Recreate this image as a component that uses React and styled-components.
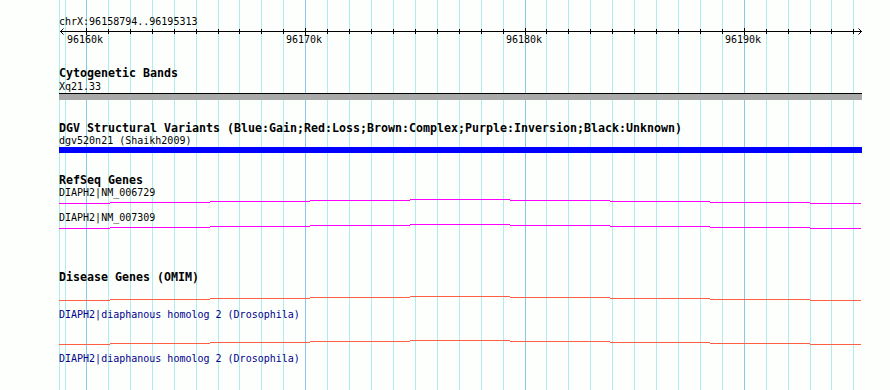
import React from "react"
import styled, { createGlobalStyle } from "styled-components"

const GlobalStyle = createGlobalStyle`
  html, body {
    margin: 0;
    padding: 0;
    background: #fdfffd;
  }
`

// grid / tick positions: one every 1k, a major one every 10k (96160k = k 0)
const tickX = k => Math.round(86.02 + 21.925 * k)
const TICKS = Array.from({ length: 36 }, (_, k) => k)
const MAJORS = [
    { k: 0, label: "96160k" },
    { k: 10, label: "96170k" },
    { k: 20, label: "96180k" },
    { k: 30, label: "96190k" },
]

// step pattern of the transcript lines (offset 0 = highest)
const SEGMENTS = [59, 110, 210, 310, 410, 510, 610, 710, 810, 861]
const OFFSETS = [4, 3, 2, 1, 0, 1, 2, 3, 4]

function App() {
    return (
        <>
            <GlobalStyle />
            <Page>
                <GridLayer width="890" height="390" shapeRendering="crispEdges">
                    <rect x="59" y="0" width="1" height="390" fill="#afeeee" />
                    <rect x="65" y="0" width="1" height="390" fill="#afeeee" />
                    {TICKS.map(k => (
                        <rect key={k} x={tickX(k)} y="0" width="1" height="390"
                            fill={k % 10 === 0 ? "#88c8e8" : "#afeeee"} />
                    ))}
                </GridLayer>

                <Panel>
                    <SmallText>chrX:96158794..96195313</SmallText>
                    <RulerSvg width="890" height="7" shapeRendering="crispEdges">
                        <rect x="60" y="3" width="802" height="1" fill="#000" />
                        {TICKS.map(k => (
                            k % 10 === 0
                                ? <rect key={k} x={tickX(k)} y="0" width="1" height="7" fill="#000" />
                                : <rect key={k} x={tickX(k)} y="1" width="1" height="5" fill="#000" />
                        ))}
                        <path d="M63.5 0.5 L60.5 3.5 L63.5 6.5" stroke="#000" fill="none" shapeRendering="auto" />
                        <path d="M858.5 0.5 L861.5 3.5 L858.5 6.5" stroke="#000" fill="none" shapeRendering="auto" />
                    </RulerSvg>
                    <TickRow>
                        {MAJORS.map(m => (
                            <TickLabel key={m.k} style={{ left: tickX(m.k) - 19 }}>{m.label}</TickLabel>
                        ))}
                    </TickRow>

                    <TrackTitle $gap={20}>Cytogenetic Bands</TrackTitle>
                    <SmallText>Xq21.33</SmallText>
                    <BandBar />

                    <TrackTitle $gap={21}>DGV Structural Variants (Blue:Gain;Red:Loss;Brown:Complex;Purple:Inversion;Black:Unknown)</TrackTitle>
                    <SmallText $gap={-1}>dgv520n21 (Shaikh2009)</SmallText>
                    <VariantBar />

                    <TrackTitle $gap={20}>RefSeq Genes</TrackTitle>
                    <SmallText $gap={-1}>DIAPH2|NM_006729</SmallText>
                    <GeneLine color="#ff00ff" />
                    <SmallText $gap={7}>DIAPH2|NM_007309</SmallText>
                    <GeneLine color="#ff00ff" />

                    <TrackTitle $gap={41}>Disease Genes (OMIM)</TrackTitle>
                    <GeneLine color="#ff5f42" gap={12} />
                    <SmallText $gap={7} $color="#00008b">DIAPH2|diaphanous homolog 2 (Drosophila)</SmallText>
                    <GeneLine color="#ff5f42" gap={19} />
                    <SmallText $gap={7} $color="#00008b">DIAPH2|diaphanous homolog 2 (Drosophila)</SmallText>
                </Panel>
            </Page>
        </>
    )
}

function GeneLine({ color, gap = 0 }) {
    return (
        <LineSvg width="890" height="5" $gap={gap} shapeRendering="crispEdges">
            {OFFSETS.map((o, i) => (
                <rect key={i} x={SEGMENTS[i]} y={o} width={SEGMENTS[i + 1] - SEGMENTS[i]} height="1" fill={color} />
            ))}
        </LineSvg>
    )
}

const Page = styled.div`
position: relative;
width: 890px;
height: 390px;
overflow: hidden;
background: #fdfffd;
`;

const GridLayer = styled.svg`
position: absolute;
top: 0;
left: 0;
display: block;
`;

const Panel = styled.div`
position: relative;
display: flex;
flex-direction: column;
padding-top: 15px;
`;

const SmallText = styled.div`
margin: ${p => p.$gap || 0}px 0 0 59px;
font-family: "DejaVu Sans Mono", "Liberation Mono", monospace;
font-size: 10px;
line-height: 13px;
height: 13px;
color: ${p => p.$color || "#000"};
white-space: pre;
`;

const TrackTitle = styled.div`
margin: ${p => p.$gap || 0}px 0 0 59px;
font-family: "DejaVu Sans Mono", "Liberation Mono", monospace;
font-weight: bold;
font-size: 11.63px;
line-height: 14px;
height: 14px;
color: #000;
white-space: pre;
`;

const RulerSvg = styled.svg`
display: block;
flex: none;
`;

const TickRow = styled.div`
position: relative;
height: 13px;
margin-top: -2px;
`;

const TickLabel = styled.span`
position: absolute;
top: 0;
font-family: "DejaVu Sans Mono", "Liberation Mono", monospace;
font-size: 10px;
line-height: 13px;
color: #000;
white-space: pre;
`;

const BandBar = styled.div`
margin-left: 59px;
width: 803px;
height: 6px;
border-top: 1px solid #000;
background: #a9a9a9;
flex: none;
`;

const VariantBar = styled.div`
margin-left: 59px;
width: 803px;
height: 6px;
background: #0000ff;
flex: none;
`;

const LineSvg = styled.svg`
display: block;
flex: none;
margin-top: ${p => p.$gap}px;
`;

export default App
